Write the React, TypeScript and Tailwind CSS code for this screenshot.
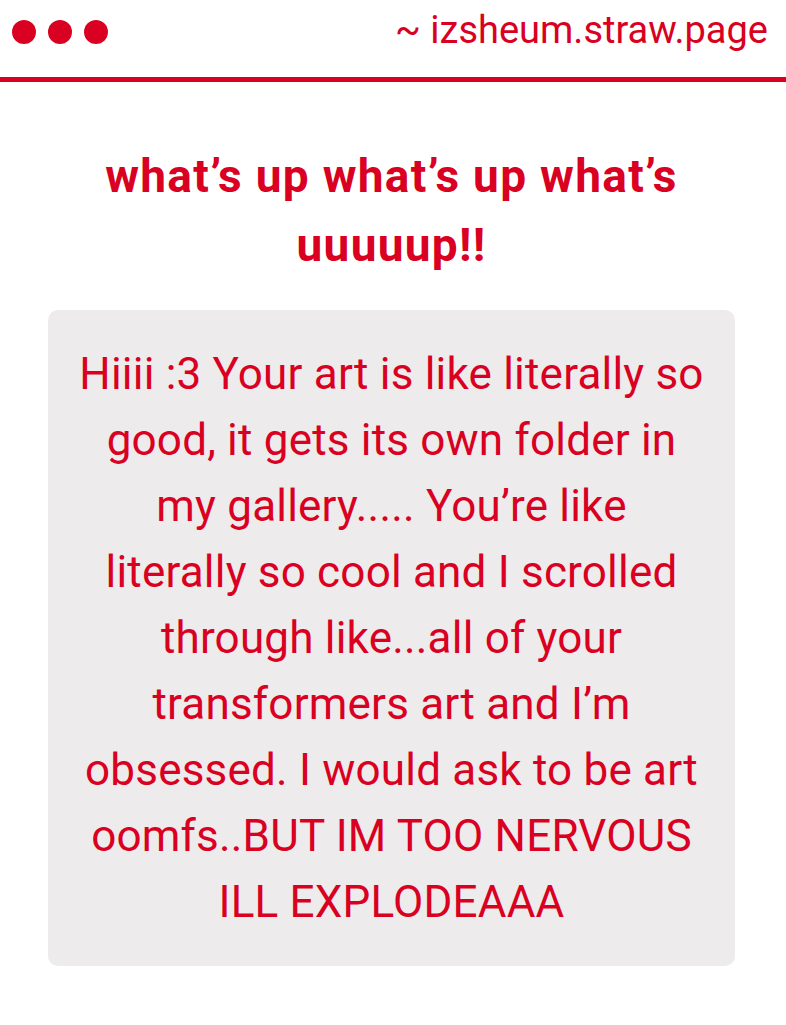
const lines = [
  "Hiiii :3 Your art is like literally so",
  "good, it gets its own folder in",
  "my gallery..... You’re like",
  "literally so cool and I scrolled",
  "through like...all of your",
  "transformers art and I’m",
  "obsessed. I would ask to be art",
  "oomfs..BUT IM TOO NERVOUS",
  "ILL EXPLODEAAA",
]

export default function App() {
  return (
    <div className="min-h-[1025px] bg-white text-[#d90021] font-['Roboto','Liberation_Sans',sans-serif]">
      <header className="flex items-start justify-between h-[82px] pl-[12px] pr-[18px] border-b-[5px] border-[#d90021]">
        <div className="flex gap-[12px] mt-[20px]">
          <span className="w-[24px] h-[24px] rounded-full bg-[#d90021]" />
          <span className="w-[24px] h-[24px] rounded-full bg-[#d90021]" />
          <span className="w-[24px] h-[24px] rounded-full bg-[#d90021]" />
        </div>
        <div className="mt-[11px] text-[38px] leading-[38px]">~ izsheum.straw.page</div>
      </header>

      <main className="pl-[48px] pr-[51px] pt-[60px]">
        <h1 className="text-center font-bold text-[46px] leading-[69px] tracking-[1.3px] px-[30px]">
          what’s up what’s up what’s uuuuup!!
        </h1>
        <div className="mt-[30px] rounded-[10px] bg-[#edebec] px-[20px] pt-[31px] pb-[31px]">
          <p className="text-center text-[44px] leading-[66px] tracking-[0.2px]">
            {lines.map((line) => (
              <span key={line} className="block whitespace-nowrap">
                {line}
              </span>
            ))}
          </p>
        </div>
      </main>
    </div>
  )
}
